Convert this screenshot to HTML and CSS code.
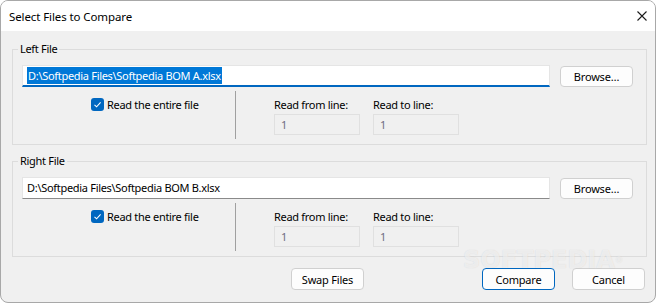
FILE: index.html
```html
<!DOCTYPE html>
<html>
<head>
    <link rel="stylesheet" href="styles.css">
</head>
<body>
    <div class="window">
        <div class="titlebar">
            <span class="title">Select Files to Compare</span>
            <svg class="close" width="10" height="10" viewBox="0 0 10 10">
                <path d="M0.5 0.5 L9.5 9.5 M9.5 0.5 L0.5 9.5" stroke="#1b1b1b" stroke-width="1.1" fill="none"/>
            </svg>
        </div>
        <div class="content">
            <fieldset class="group">
                <legend>Left File</legend>
                <div class="file-row">
                    <div class="textbox focused"><span class="selected">D:\Softpedia Files\Softpedia BOM A.xlsx</span></div>
                    <button class="btn browse">Browse…</button>
                </div>
                <div class="options">
                    <div class="check-cell">
                        <span class="checkbox">
                            <svg width="13" height="13" viewBox="0 0 13 13"><path d="M3.5 6.8 L5.6 8.8 L9.6 4.4" stroke="#fff" stroke-width="1.1" fill="none"/></svg>
                        </span>
                        <span>Read the entire file</span>
                    </div>
                    <div class="separator"></div>
                    <div class="field">
                        <div class="field-label">Read from line:</div>
                        <div class="numbox">1</div>
                    </div>
                    <div class="field">
                        <div class="field-label">Read to line:</div>
                        <div class="numbox">1</div>
                    </div>
                </div>
            </fieldset>

            <fieldset class="group">
                <legend>Right File</legend>
                <div class="file-row">
                    <div class="textbox">D:\Softpedia Files\Softpedia BOM B.xlsx</div>
                    <button class="btn browse">Browse…</button>
                </div>
                <div class="options">
                    <div class="check-cell">
                        <span class="checkbox">
                            <svg width="13" height="13" viewBox="0 0 13 13"><path d="M3.5 6.8 L5.6 8.8 L9.6 4.4" stroke="#fff" stroke-width="1.1" fill="none"/></svg>
                        </span>
                        <span>Read the entire file</span>
                    </div>
                    <div class="separator"></div>
                    <div class="field">
                        <div class="field-label">Read from line:</div>
                        <div class="numbox">1</div>
                    </div>
                    <div class="field">
                        <div class="field-label">Read to line:</div>
                        <div class="numbox">1</div>
                    </div>
                </div>
            </fieldset>

            <div class="actions">
                <button class="btn">Swap Files</button>
                <button class="btn default compare">Compare</button>
                <button class="btn">Cancel</button>
            </div>
        </div>
        <div class="watermark">SOFTPEDIA<span class="reg">®</span></div>
    </div>
</body>
</html>
```

FILE: styles.css
```css
body {
  margin: 0;
  background: #fff;
  font-family: "Noto Sans", "Open Sans", sans-serif;
  font-size: 11px;
  letter-spacing: -0.3px;
  color: #000;
}

/* Dialog frame */
.window {
  position: relative;
  box-sizing: border-box;
  width: 656px;
  height: 303px;
  border: 1px solid #a8a8a8;
  border-radius: 8px;
  overflow: hidden;
  background: #f0f0f0;
}

.titlebar {
  height: 30px;
  background: #fff;
  display: flex;
  align-items: center;
  justify-content: space-between;
  padding: 0 8px 0 8px;
}

.title {
  font-size: 11.5px;
  letter-spacing: -0.1px;
}

.content {
  padding-top: 10px;
}

/* Group boxes */
.group {
  margin: 0 0 0 11px;
  width: 635px;
  box-sizing: border-box;
  border: 1px solid #dcdcdc;
  padding: 8px 13px 5px 9px;
  min-inline-size: 0;
}

.group + .group {
  margin-top: 8px;
}

.group legend {
  padding: 0 2px;
  margin-left: -4px;
  line-height: 16px;
}

.file-row {
  display: flex;
  align-items: flex-start;
}

.textbox {
  box-sizing: border-box;
  width: 528px;
  height: 22px;
  background: #fff;
  border: 1px solid #e5e5e5;
  border-bottom-color: #8a8a8a;
  padding: 0 0 0 4px;
  line-height: 20px;
  white-space: nowrap;
}

.textbox.focused {
  border-bottom: 2px solid #0067c0;
  line-height: 19px;
}

.selected {
  background: #0078d7;
  color: #fff;
  padding: 1px 1px;
}

/* Buttons */
.btn {
  box-sizing: border-box;
  width: 73px;
  height: 22px;
  background: #fdfdfd;
  border: 1px solid #d0d0d0;
  border-radius: 4px;
  font-family: inherit;
  font-size: 11px;
  letter-spacing: -0.2px;
  color: #000;
  padding: 0;
}

.btn.browse {
  margin-left: 10px;
  margin-top: 1px;
  height: 21px;
}

.btn.default {
  border-color: #0067c0;
}

/* Options row */
.options {
  display: flex;
  margin-top: 4px;
  height: 48px;
}

.check-cell {
  width: 213px;
  box-sizing: border-box;
  padding: 7px 0 0 69px;
  display: flex;
  align-items: flex-start;
  gap: 3px;
  line-height: 14px;
}

.checkbox {
  width: 13px;
  height: 13px;
  border-radius: 3px;
  background: #0067c0;
  display: inline-block;
}

.checkbox svg {
  display: block;
}

.separator {
  width: 1px;
  background: #a0a0a0;
}

.field {
  width: 86px;
  padding-top: 6px;
  margin-left: 13px;
}

.separator + .field {
  margin-left: 38px;
}

.field-label {
  line-height: 16px;
  margin-bottom: 1px;
}

.numbox {
  box-sizing: border-box;
  height: 21px;
  border: 1px solid #e0e0e0;
  padding-left: 6px;
  line-height: 19px;
  color: #6d6d80;
}

/* Bottom buttons */
.actions {
  display: flex;
  margin-top: 11px;
  padding: 0 10px 0 290px;
  gap: 17px;
}

.actions .compare {
  margin-left: auto;
}

.watermark {
  position: absolute;
  left: 462px;
  top: 252px;
  font-family: "DejaVu Sans", sans-serif;
  font-weight: bold;
  font-size: 24px;
  line-height: 15px;
  letter-spacing: 0;
  color: rgba(255, 255, 255, 0.6);
  text-shadow: 0 0 1px rgba(140, 140, 140, 0.3);
  pointer-events: none;
}

.watermark .reg {
  font-size: 8px;
  vertical-align: top;
}
```
